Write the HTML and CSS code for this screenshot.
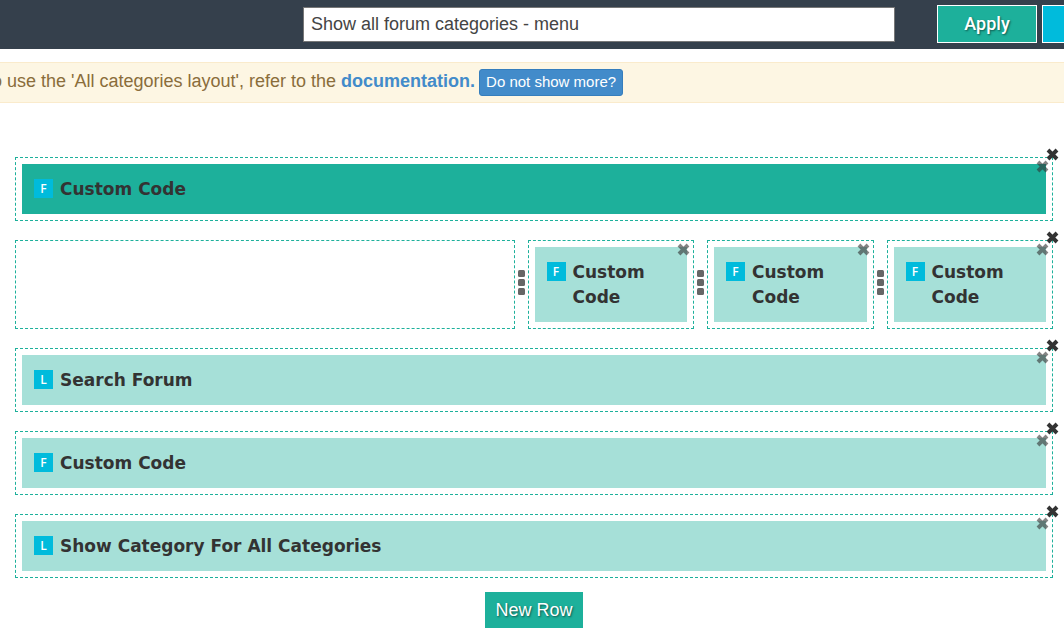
FILE: index.html
```
<!DOCTYPE html>
<html lang="en">
<head>
<meta charset="utf-8">
<title>Layout editor</title>
<link rel="stylesheet" href="styles.css">
</head>
<body>
<svg class="sprite" aria-hidden="true">
  <symbol id="times" viewBox="0 0 13 13"><path d="M2 2 11 11M11 2 2 11" fill="none" stroke="currentColor" stroke-width="3.9"/></symbol>
  <symbol id="grip" viewBox="0 0 7 25"><rect width="7" height="7" rx="1.5"/><rect y="9" width="7" height="7" rx="1.5"/><rect y="18" width="7" height="7" rx="1.5"/></symbol>
</svg>
<header class="topbar">
  <input class="layout-name" type="text" aria-label="Layout name" value="Show all forum categories - menu">
  <button class="action apply" type="button">Apply</button>
  <button class="action secondary" type="button" aria-label="More actions"></button>
</header>
<div class="notice">
  <p class="notice-text">to use the 'All categories layout', refer to the <a class="doc-link" href="#">documentation.</a></p>
  <button class="dismiss" type="button">Do not show more?</button>
</div>
<main class="editor">
  <section class="row">
    <button class="close" type="button" aria-label="Remove row"><svg><use href="#times"/></svg></button>
    <div class="cell"><div class="block active"><span class="badge">F</span><span class="name">Custom Code</span><button class="close faded" type="button" aria-label="Remove block"><svg><use href="#times"/></svg></button></div></div>
  </section>
  <section class="row columns">
    <button class="close" type="button" aria-label="Remove row"><svg><use href="#times"/></svg></button>
    <div class="cell"></div>
    <svg class="grip"><use href="#grip"/></svg>
    <div class="cell"><div class="block"><span class="badge">F</span><span class="name">Custom Code</span><button class="close faded" type="button" aria-label="Remove block"><svg><use href="#times"/></svg></button></div></div>
    <svg class="grip"><use href="#grip"/></svg>
    <div class="cell"><div class="block"><span class="badge">F</span><span class="name">Custom Code</span><button class="close faded" type="button" aria-label="Remove block"><svg><use href="#times"/></svg></button></div></div>
    <svg class="grip"><use href="#grip"/></svg>
    <div class="cell"><div class="block"><span class="badge">F</span><span class="name">Custom Code</span><button class="close faded" type="button" aria-label="Remove block"><svg><use href="#times"/></svg></button></div></div>
  </section>
  <section class="row">
    <button class="close" type="button" aria-label="Remove row"><svg><use href="#times"/></svg></button>
    <div class="cell"><div class="block"><span class="badge">L</span><span class="name">Search Forum</span><button class="close faded" type="button" aria-label="Remove block"><svg><use href="#times"/></svg></button></div></div>
  </section>
  <section class="row">
    <button class="close" type="button" aria-label="Remove row"><svg><use href="#times"/></svg></button>
    <div class="cell"><div class="block"><span class="badge">F</span><span class="name">Custom Code</span><button class="close faded" type="button" aria-label="Remove block"><svg><use href="#times"/></svg></button></div></div>
  </section>
  <section class="row">
    <button class="close" type="button" aria-label="Remove row"><svg><use href="#times"/></svg></button>
    <div class="cell"><div class="block"><span class="badge">L</span><span class="name">Show Category For All Categories</span><button class="close faded" type="button" aria-label="Remove block"><svg><use href="#times"/></svg></button></div></div>
  </section>
</main>
<footer class="footer"><button class="new-row" type="button">New Row</button></footer>
</body>
</html>
```
FILE: styles.css
```
* { box-sizing: border-box; }
body { margin: 0; background: #fff; color: #333; font: 18px/25px "Liberation Sans", Arial, sans-serif; overflow-x: hidden; }
button { font: inherit; cursor: pointer; }
.sprite { position: absolute; width: 0; height: 0; }

.topbar { display: flex; align-items: center; padding: 5px 0 6px 303px; background: #35404c; overflow: hidden; }
.layout-name { flex: 1; min-width: 0; height: 35px; margin-right: 42px; padding: 0 7px; border: 1px solid #777; background: #fff; color: #444; font: inherit; }
.action { flex: none; width: 100px; height: 38px; padding: 0 0 2px; border: 1px solid #fff; color: #fff; font-family: Roboto, sans-serif; font-weight: 500; text-shadow: 1px 1px 2px rgba(0, 0, 0, .5); }
.apply { background: #1db09b; margin-right: 5px; }
.secondary { background: #00bbdc; margin-right: -78px; }

.notice { display: flex; align-items: center; gap: 4px; margin-top: 13px; padding: 6px 0; border: solid #faebcc; border-width: 1px 0; background: #fdf6e3; color: #8a6d3b; overflow: hidden; white-space: nowrap; }
.notice-text { margin: 0 0 2px -13px; }
.doc-link { color: #428bca; font-weight: bold; text-decoration: none; }
.dismiss { height: 27px; padding: 0 6px 2px; border: 1px solid #357ebd; border-radius: 3px; background: #428bca; color: #fff; font-size: 15px; line-height: 24px; }

.editor { display: flex; flex-direction: column; gap: 19px; padding: 54px 11px 0 15px; }
.row { position: relative; }
.columns { display: grid; grid-template-columns: 3fr 13px 1fr 13px 1fr 13px 1fr; }
.cell { min-width: 0; padding: 6px; border: 1px dashed #1db09b; }
.block { position: relative; display: flex; align-items: flex-start; gap: 7px; padding: 13px 12px 12px; background: #a6e0d8; }
.active { background: #1db09b; }
.badge { flex: none; width: 19px; height: 19px; margin-top: 2px; background: #00bbdc; color: #fff; font: 600 12px/19px "Open Sans", sans-serif; text-align: center; }
.name { font-family: Verdana, "DejaVu Sans", sans-serif; font-size: 17px; font-weight: bold; }
.grip { justify-self: center; width: 7px; height: 25px; margin-top: 30px; fill: #666; }
.close { position: absolute; z-index: 1; top: -9px; right: -6px; width: 13px; height: 13px; padding: 0; border: 0; background: none; color: #333; }
.close svg { display: block; width: 13px; height: 13px; }
.faded { top: -4px; right: -3px; opacity: .6; }

.footer { padding: 14px 11px 14px 15px; text-align: center; }
.new-row { padding: 6px 10px 5px; border: 0; background: #1db09b; color: #fff; text-shadow: 1px 1px 2px rgba(0, 0, 0, .5); }
```
